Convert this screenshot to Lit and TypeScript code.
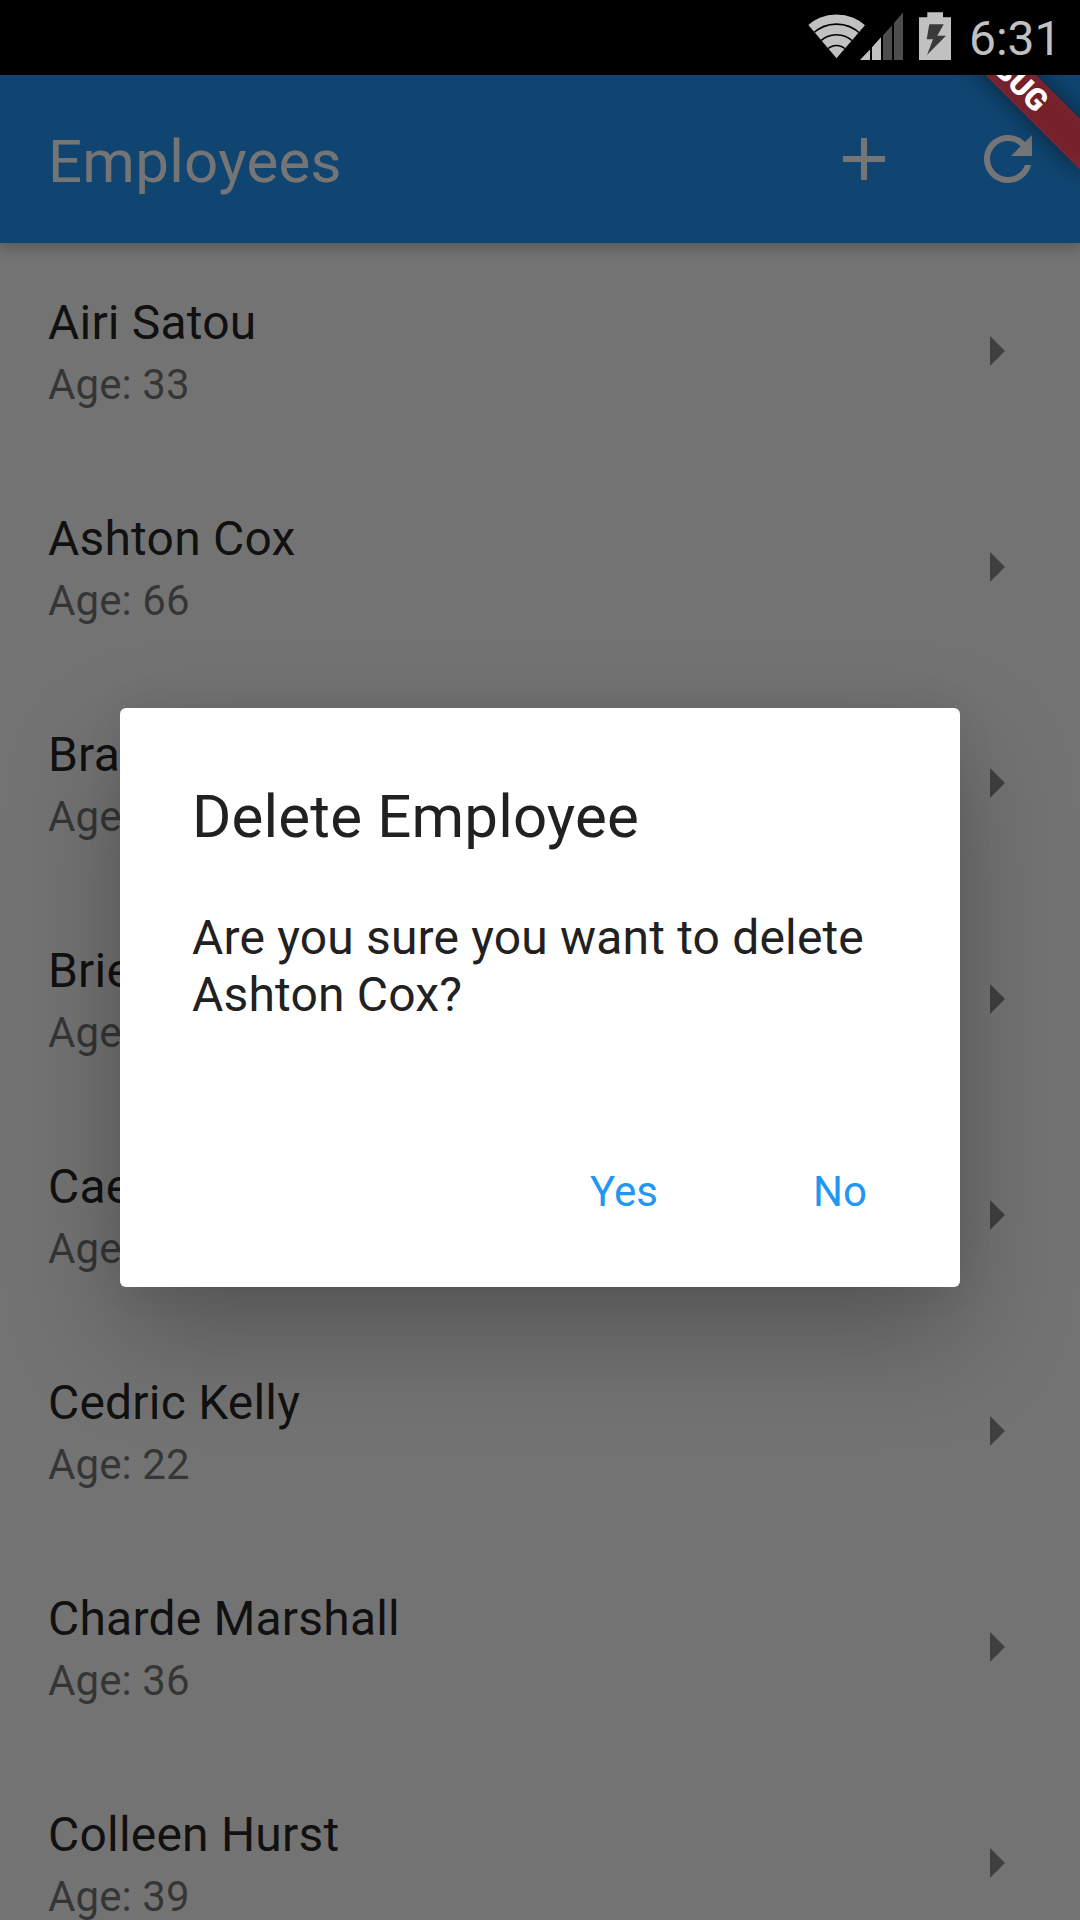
import { LitElement, html, css, svg } from "lit";
import { customElement, property } from "lit/decorators.js";

interface Employee {
  name: string;
  age: string;
}

const EMPLOYEES: Employee[] = [
  { name: "Airi Satou", age: "Age: 33" },
  { name: "Ashton Cox", age: "Age: 66" },
  { name: "Bra", age: "Age" },
  { name: "Brie", age: "Age" },
  { name: "Cae", age: "Age" },
  { name: "Cedric Kelly", age: "Age: 22" },
  { name: "Charde Marshall", age: "Age: 36" },
  { name: "Colleen Hurst", age: "Age: 39" },
];

@customElement("status-bar")
class StatusBar extends LitElement {
  static styles = css`
    :host {
      display: flex;
      justify-content: flex-end;
      height: 75px;
      background: #000;
      color: #c1c1c1;
    }
    .icons {
      display: block;
      flex: none;
    }
    .clock {
      width: 111px;
      font-size: 48px;
      line-height: 78px;
      white-space: nowrap;
    }
  `;
  render() {
    return html`
      <svg class="icons" width="162" height="75" viewBox="807 0 162 75">
        <defs>
          <clipPath id="cone"><path d="M836.5 58.3 L807.5 24 V10 H866 V24 Z" /></clipPath>
        </defs>
        <g clip-path="url(#cone)">
          <circle cx="836.5" cy="58.3" r="43.8" fill="#c1c1c1" />
          <g fill="none" stroke="#000" stroke-width="1.6">
            <circle cx="836.5" cy="58.3" r="34.2" />
            <circle cx="836.5" cy="58.3" r="23.6" />
            <circle cx="836.5" cy="58.3" r="12.8" />
          </g>
        </g>
        <path d="M860 60 L870 49.5 V60 Z M872 60 V47.3 L881 37.3 V60 Z" fill="#c1c1c1" />
        <path d="M883 60 V35.3 L892 25.5 V60 Z M894 60 V23 L903 12.5 V60 Z" fill="#4d4d4d" />
        <path d="M919 60 V17.3 H927.3 V12.3 H943 V17.3 H951 V60 Z" fill="#c1c1c1" />
        <path d="M929.3 24.3 H943.7 L937.3 35.7 H946 L927 55 L933 39.3 H926.7 Z" fill="#3a3a3a" />
      </svg>
      <div class="clock">6:31</div>
    `;
  }
}

@customElement("app-header")
class AppHeader extends LitElement {
  static styles = css`
    :host {
      display: flex;
      align-items: center;
      height: 168px;
      padding-left: 48px;
      background: #2196f3;
      color: #fff;
      box-shadow: 0 4px 14px rgba(0, 0, 0, 0.26);
    }
    .title {
      flex: 1;
      font-size: 60px;
      line-height: 70px;
      padding-top: 6px;
      letter-spacing: 0.27px;
    }
    .action {
      display: flex;
      width: 144px;
      justify-content: center;
    }
  `;
  render() {
    const icon = (d: string) => html`
      <div class="action">
        <svg width="72" height="72" viewBox="0 0 24 24" fill="currentColor">${svg`<path d=${d} />`}</svg>
      </div>`;
    return html`
      <div class="title">Employees</div>
      ${icon("M19 13h-6v6h-2v-6H5v-2h6V5h2v6h6v2z")}
      ${icon(
        "M17.65 6.35C16.2 4.9 14.21 4 12 4c-4.42 0-7.99 3.58-7.99 8s3.57 8 7.99 8c3.73 0 6.84-2.55 7.73-6h-2.08c-.82 2.33-3.04 4-5.65 4-3.31 0-6-2.69-6-6s2.69-6 6-6c1.66 0 3.14.69 4.22 1.78L13 11h7V4l-2.35 2.35z",
      )}
    `;
  }
}

@customElement("employee-row")
class EmployeeRow extends LitElement {
  @property() name = "";
  @property() age = "";
  static styles = css`
    :host {
      display: flex;
      align-items: center;
      height: 216px;
      padding: 0 48px;
      box-sizing: border-box;
    }
    .text {
      flex: 1;
      padding-top: 6px;
    }
    .name {
      font-size: 48px;
      line-height: 56px;
      letter-spacing: 0.2px;
      color: rgba(0, 0, 0, 0.87);
    }
    .age {
      margin-top: 6px;
      font-size: 42px;
      line-height: 56px;
      letter-spacing: 0.1px;
      color: rgba(0, 0, 0, 0.54);
    }
  `;
  render() {
    return html`
      <div class="text">
        <div class="name">${this.name}</div>
        <div class="age">${this.age}</div>
      </div>
      <svg width="72" height="72" viewBox="0 0 24 24" fill="rgba(0,0,0,.45)"><path d="M10 17l5-5-5-5v10z" /></svg>
    `;
  }
}

@customElement("confirm-dialog")
class ConfirmDialog extends LitElement {
  @property() name = "";
  static styles = css`
    :host {
      display: flex;
      flex-direction: column;
      width: 840px;
      height: 579px;
      box-sizing: border-box;
      padding: 74px 24px 24px 72px;
      border-radius: 6px;
      background: #fff;
      color: #212121;
      box-shadow: 0 48px 110px rgba(0, 0, 0, 0.25), 0 0 40px rgba(0, 0, 0, 0.06);
    }
    .title {
      font-size: 60px;
      line-height: 70px;
      letter-spacing: 0.18px;
    }
    .message {
      margin-top: 57px;
      font-size: 48px;
      line-height: 57px;
      letter-spacing: 0.17px;
      white-space: nowrap;
    }
    .actions {
      display: flex;
      justify-content: flex-end;
      margin-top: auto;
    }
    .button {
      display: flex;
      align-items: center;
      justify-content: center;
      width: 192px;
      height: 144px;
      margin-left: 24px;
      font-size: 42px;
      color: #2196f3;
    }
  `;
  render() {
    return html`
      <div class="title">Delete Employee</div>
      <div class="message">Are you sure you want to delete<br />${this.name}?</div>
      <div class="actions">
        <div class="button">Yes</div>
        <div class="button">No</div>
      </div>
    `;
  }
}

@customElement("app-root")
class AppRoot extends LitElement {
  static styles = css`
    :host {
      display: block;
      position: relative;
      width: 1080px;
      height: 1920px;
      overflow: hidden;
      background: #fafafa;
      font-family: Roboto, sans-serif;
    }
    status-bar {
      position: relative;
      z-index: 3;
    }
    app-header {
      position: relative;
    }
    .scrim {
      position: absolute;
      inset: 0;
      z-index: 1;
      display: flex;
      align-items: center;
      justify-content: center;
      padding-top: 75px;
      background: rgba(0, 0, 0, 0.54);
    }
    .banner {
      position: absolute;
      z-index: 2;
      left: 960px;
      top: 84px;
      width: 240px;
      height: 36px;
      transform-origin: 120px -84px;
      transform: rotate(45deg);
    }
    .shadow {
      position: absolute;
      inset: 0;
      background: rgba(0, 0, 0, 0.5);
      filter: blur(11.9px);
    }
    .ribbon {
      position: relative;
      height: 36px;
      background: rgba(183, 28, 28, 0.627);
      color: #fff;
      font-size: 30.6px;
      font-weight: 900;
      line-height: 36px;
      text-align: center;
    }
  `;
  render() {
    return html`
      <status-bar></status-bar>
      <app-header></app-header>
      <div class="list">
        ${EMPLOYEES.map((e) => html`<employee-row .name=${e.name} .age=${e.age}></employee-row>`)}
      </div>
      <div class="scrim"><confirm-dialog name="Ashton Cox"></confirm-dialog></div>
      <div class="banner">
        <div class="shadow"></div>
        <div class="ribbon">DEBUG</div>
      </div>
    `;
  }
}
